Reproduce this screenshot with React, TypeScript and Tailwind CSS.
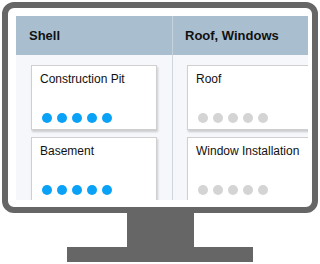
import React from "react";

const Dots = ({ on }: { on: boolean }) => (
  <div className="flex gap-[5px]">
    {[0, 1, 2, 3, 4].map((i) => (
      <div
        key={i}
        className={`w-[10px] h-[10px] rounded-full ${on ? "bg-[#0aa2f7]" : "bg-[#d4d4d4]"}`}
      />
    ))}
  </div>
);

const Card = ({ title, on }: { title: string; on: boolean }) => (
  <div className="w-[126px] h-[65px] shrink-0 bg-white border border-[#cfcfcf] shadow-[1px_2px_2px_rgba(0,0,0,0.18)] pl-[8px] pt-[4px] flex flex-col justify-between pb-[6px]">
    <div className="text-[12px] leading-[18px] text-[#111] whitespace-nowrap">{title}</div>
    <div className="pl-[2px]">
      <Dots on={on} />
    </div>
  </div>
);

export default function App() {
  return (
    <div
      className="w-[320px] h-[264px] bg-white flex flex-col items-center"
      style={{ fontFamily: '"Liberation Sans", Arial, sans-serif' }}
    >
      <div className="mt-[2px] w-[316px] h-[211px] shrink-0 border-[6px] border-[#666] rounded-[12px] bg-white pl-[8px] pt-[8px] pr-[4px] pb-[7px]">
        <div className="w-full h-full overflow-hidden bg-[#f5f7fb] flex flex-col">
          <div className="flex h-[39px] shrink-0 bg-[#a9bfd0]">
            <div className="w-[157px] shrink-0 border-r border-[#c5d2dc] flex items-center pl-[13px] font-bold text-[13px] text-[#111]">
              Shell
            </div>
            <div className="flex items-center pl-[12px] font-bold text-[13px] text-[#111] whitespace-nowrap">
              Roof, Windows
            </div>
          </div>
          <div className="flex flex-1">
            <div className="w-[157px] shrink-0 border-r border-[#d0d6dd] pl-[15px] pt-[10px] flex flex-col gap-[7px]">
              <Card title="Construction Pit" on />
              <Card title="Basement" on />
            </div>
            <div className="pl-[14px] pt-[10px] flex flex-col gap-[7px]">
              <Card title="Roof" on={false} />
              <Card title="Window Installation" on={false} />
            </div>
          </div>
        </div>
      </div>
      <div className="w-[67px] h-[34px] shrink-0 bg-[#666]" />
      <div className="w-[186px] h-[15px] shrink-0 bg-[#666]" />
    </div>
  );
}
